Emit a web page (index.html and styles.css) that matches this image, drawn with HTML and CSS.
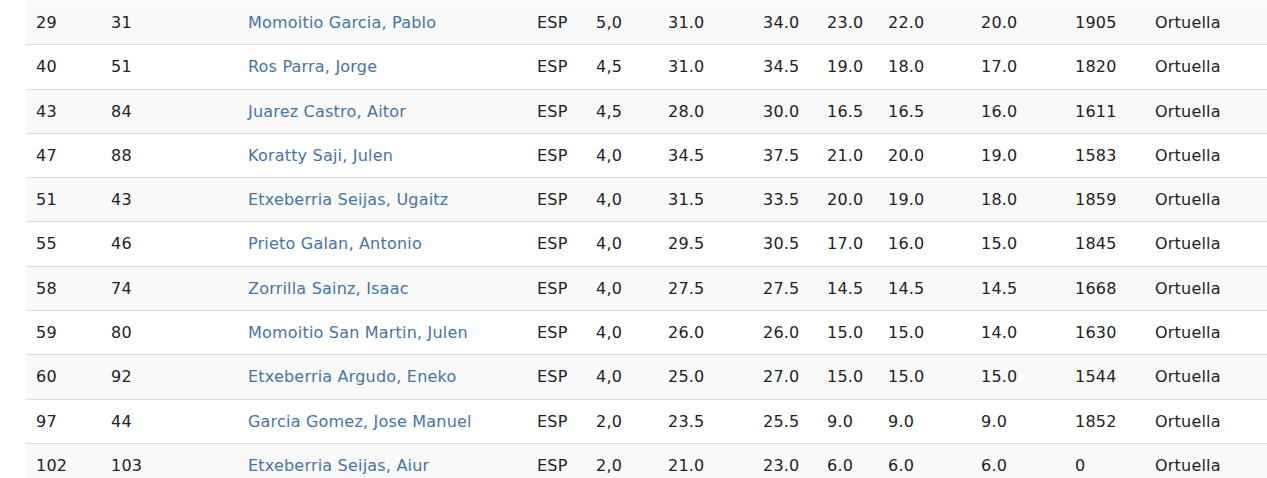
FILE: index.html
```html
<!DOCTYPE html>
<html>
<head>
<meta charset="utf-8">
<link rel="stylesheet" href="styles.css">
</head>
<body>
<div class="wrap">
<table class="standings">
<colgroup>
<col class="c1"><col class="c2"><col class="c3"><col class="c4"><col class="c5"><col class="c6"><col class="c7"><col class="c8"><col class="c9"><col class="c10"><col class="c11"><col class="c12">
</colgroup>
<tbody>
<tr><td>29</td><td>31</td><td><a href="#">Momoitio Garcia, Pablo</a></td><td>ESP</td><td>5,0</td><td>31.0</td><td>34.0</td><td>23.0</td><td>22.0</td><td>20.0</td><td>1905</td><td>Ortuella</td></tr>
<tr><td>40</td><td>51</td><td><a href="#">Ros Parra, Jorge</a></td><td>ESP</td><td>4,5</td><td>31.0</td><td>34.5</td><td>19.0</td><td>18.0</td><td>17.0</td><td>1820</td><td>Ortuella</td></tr>
<tr><td>43</td><td>84</td><td><a href="#">Juarez Castro, Aitor</a></td><td>ESP</td><td>4,5</td><td>28.0</td><td>30.0</td><td>16.5</td><td>16.5</td><td>16.0</td><td>1611</td><td>Ortuella</td></tr>
<tr><td>47</td><td>88</td><td><a href="#">Koratty Saji, Julen</a></td><td>ESP</td><td>4,0</td><td>34.5</td><td>37.5</td><td>21.0</td><td>20.0</td><td>19.0</td><td>1583</td><td>Ortuella</td></tr>
<tr><td>51</td><td>43</td><td><a href="#">Etxeberria Seijas, Ugaitz</a></td><td>ESP</td><td>4,0</td><td>31.5</td><td>33.5</td><td>20.0</td><td>19.0</td><td>18.0</td><td>1859</td><td>Ortuella</td></tr>
<tr><td>55</td><td>46</td><td><a href="#">Prieto Galan, Antonio</a></td><td>ESP</td><td>4,0</td><td>29.5</td><td>30.5</td><td>17.0</td><td>16.0</td><td>15.0</td><td>1845</td><td>Ortuella</td></tr>
<tr><td>58</td><td>74</td><td><a href="#">Zorrilla Sainz, Isaac</a></td><td>ESP</td><td>4,0</td><td>27.5</td><td>27.5</td><td>14.5</td><td>14.5</td><td>14.5</td><td>1668</td><td>Ortuella</td></tr>
<tr><td>59</td><td>80</td><td><a href="#">Momoitio San Martin, Julen</a></td><td>ESP</td><td>4,0</td><td>26.0</td><td>26.0</td><td>15.0</td><td>15.0</td><td>14.0</td><td>1630</td><td>Ortuella</td></tr>
<tr><td>60</td><td>92</td><td><a href="#">Etxeberria Argudo, Eneko</a></td><td>ESP</td><td>4,0</td><td>25.0</td><td>27.0</td><td>15.0</td><td>15.0</td><td>15.0</td><td>1544</td><td>Ortuella</td></tr>
<tr><td>97</td><td>44</td><td><a href="#">Garcia Gomez, Jose Manuel</a></td><td>ESP</td><td>2,0</td><td>23.5</td><td>25.5</td><td>9.0</td><td>9.0</td><td>9.0</td><td>1852</td><td>Ortuella</td></tr>
<tr><td>102</td><td>103</td><td><a href="#">Etxeberria Seijas, Aiur</a></td><td>ESP</td><td>2,0</td><td>21.0</td><td>23.0</td><td>6.0</td><td>6.0</td><td>6.0</td><td>0</td><td>Ortuella</td></tr>
</tbody>
</table>
</div>
</body>
</html>
```

FILE: styles.css
```css
html, body {
  margin: 0;
  padding: 0;
  background: #ffffff;
}
.wrap {
  padding-left: 26px;
  padding-top: 1px;
  width: 1241px;
}
.standings {
  width: 1241px;
  table-layout: fixed;
  border-collapse: collapse;
  font-family: "DejaVu Sans", Verdana, sans-serif;
  font-size: 16px;
  letter-spacing: 0.2px;
  color: #222222;
}
.standings td {
  padding: 11px 10px;
  line-height: 21.3px;
  border-bottom: 1px solid #dddddd;
  white-space: nowrap;
  text-align: left;
  vertical-align: middle;
}
.standings tr:nth-child(odd) td {
  background: #f9f9f9;
}
.standings a {
  color: #4674a6;
  text-decoration: none;
}
.c1 { width: 75px; }
.c2 { width: 137px; }
.c3 { width: 289px; }
.c4 { width: 59px; }
.c5 { width: 72px; }
.c6 { width: 95px; }
.c7 { width: 64px; }
.c8 { width: 61px; }
.c9 { width: 93px; }
.c10 { width: 94px; }
.c11 { width: 80px; }
.c12 { width: 122px; }
```
